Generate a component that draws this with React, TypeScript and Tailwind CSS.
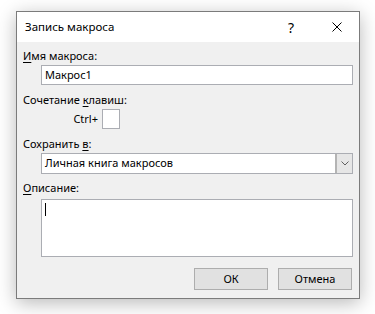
import React from "react";

// Access-key letter, underlined like a Win32 label
function Key({ children }: { children: React.ReactNode }) {
  return <span className="underline underline-offset-[2px] decoration-1">{children}</span>;
}

function Label({ children, className = "" }: { children: React.ReactNode; className?: string }) {
  return <div className={`h-[16px] leading-[16px] pl-[6px] ${className}`}>{children}</div>;
}

function Button({ children }: { children: React.ReactNode }) {
  return (
    <div className="flex h-[22px] w-[74px] items-center justify-center border border-[#adadad] bg-[#e1e1e1]">
      {children}
    </div>
  );
}

export default function App() {
  return (
    <div
      className="h-[314px] w-[375px] bg-white pl-[16px] pt-[11px] text-[11px] text-black"
      style={{ fontFamily: '"Noto Sans", "Open Sans", sans-serif' }}
    >
      <div className="flex h-[288px] w-[344px] flex-col border border-[#7b7b7b] bg-[#f0f0f0] shadow-[0_4px_18px_rgba(0,0,0,0.28)]">
        {/* Title bar */}
        <div className="flex h-[30px] items-center bg-white">
          <div className="flex-1 pl-[8px] text-[11.5px] leading-[16px]">Запись макроса</div>
          <div className="flex h-full w-[46px] items-center justify-center pl-[2px] text-[14px]">?</div>
          <div className="flex h-full w-[46px] items-center justify-center pl-[2px]">
            <svg width="10" height="10" viewBox="0 0 10 10">
              <path d="M0.5 0.5 L9.5 9.5 M9.5 0.5 L0.5 9.5" stroke="#000" strokeWidth="1" fill="none" />
            </svg>
          </div>
        </div>

        {/* Body */}
        <div className="flex flex-1 flex-col pr-[6px] pb-[8px]">
          <Label className="mt-[6px]">
            <Key>И</Key>мя макроса:
          </Label>
          <div className="ml-[24px] mt-[1px] flex h-[20px] items-center border border-[#abadb3] bg-white pl-[3px]">
            Макрос1
          </div>

          <Label className="mt-[7px]">
            Сочетание <Key>к</Key>лавиш:
          </Label>
          <div className="mt-[1px] flex h-[20px] items-center">
            <span className="w-[81px] text-right">Ctrl+</span>
            <div className="ml-[4px] h-[20px] w-[18px] border border-[#abadb3] bg-white" />
          </div>

          <Label className="mt-[7px]">
            Сохранить <Key>в</Key>:
          </Label>
          <div className="ml-[24px] mt-[1px] flex h-[21px] border border-[#abadb3] bg-white">
            <div className="flex flex-1 items-center pl-[3px]">Личная книга макросов</div>
            <div className="flex w-[17px] items-center justify-center border-l-2 border-[#b4b4b4] bg-[#e6e6e6]">
              <svg width="8" height="5" viewBox="0 0 8 5">
                <path d="M0.5 0.5 L4 4 L7.5 0.5" stroke="#606060" strokeWidth="1" fill="none" />
              </svg>
            </div>
          </div>

          <Label className="mt-[6px]">
            <Key>О</Key>писание:
          </Label>
          <div className="ml-[24px] mt-[3px] h-[58px] border border-[#abadb3] bg-white pl-[3px] pt-[3px]">
            <div className="h-[13px] w-px bg-black" />
          </div>

          <div className="mt-[11px] flex justify-end gap-[10px] pr-px">
            <Button>ОК</Button>
            <Button>Отмена</Button>
          </div>
        </div>
      </div>
    </div>
  );
}
